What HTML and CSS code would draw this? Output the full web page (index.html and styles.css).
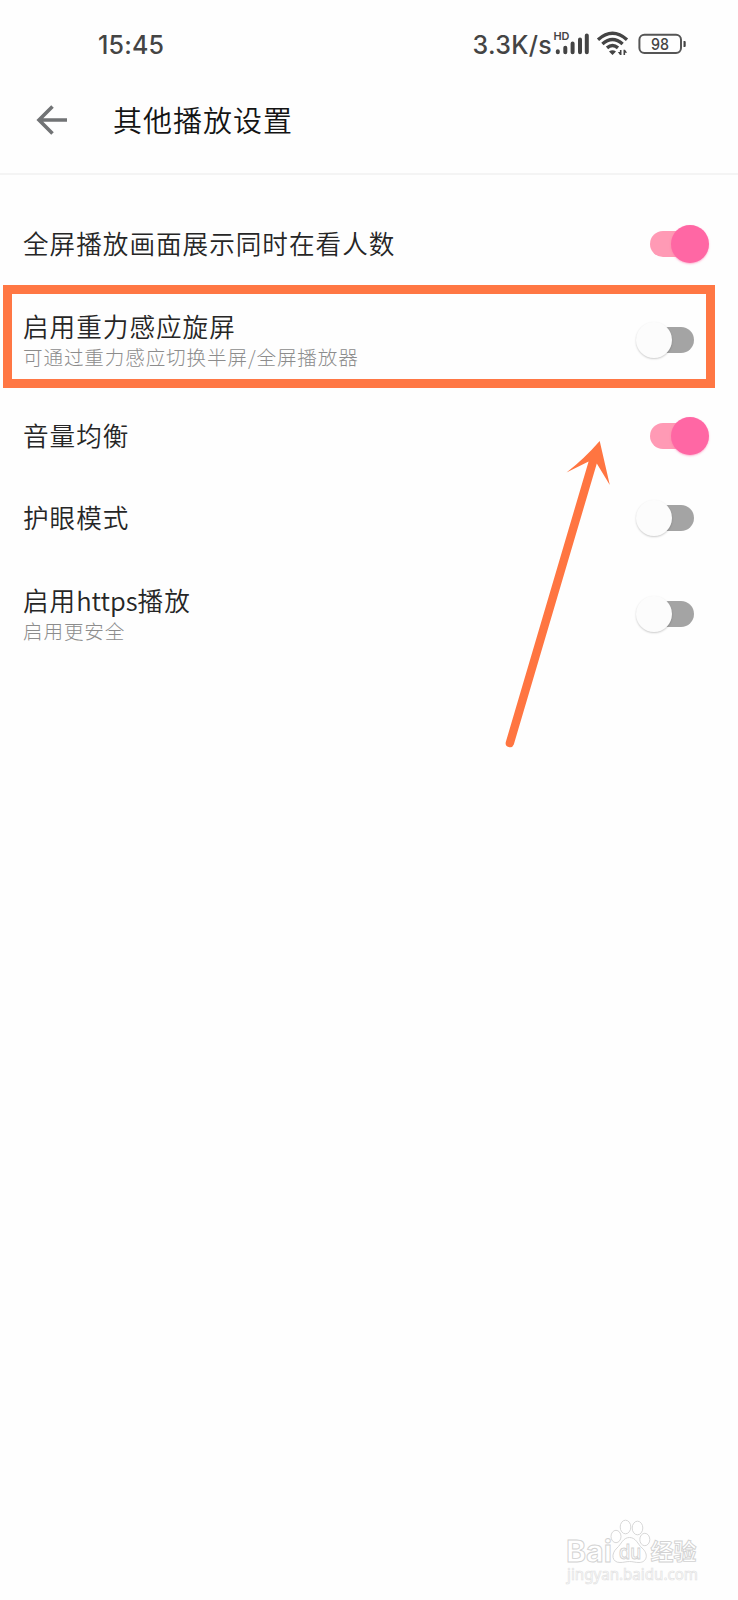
FILE: index.html
```html
<!DOCTYPE html>
<html lang="zh-CN">
<head>
<meta charset="utf-8">
<title>其他播放设置</title>
<link rel="stylesheet" href="styles.css">
</head>
<body>
<div class="screen">
  <div class="status">
    <span class="time">15:45</span>
    <div class="status-right">
      <span class="speed">3.3K/s</span>
      <svg class="status-icons" width="150" height="30" viewBox="0 0 150 30">
        <text class="hd" x="1.500" y="11" textLength="16" lengthAdjust="spacingAndGlyphs">HD</text>
        <g class="bars">
          <path d="M5.8 22.200v1M13.3 18.700v4.500M20.6 14.500v8.700M28 10.500v12.700M34.8 6.500v16.700"/>
        </g>
        <g class="wifi">
          <path d="M46 10.8Q60.500-2.200 75 10.8"/>
          <path d="M50.4 15Q60.500 6 70.600 15"/>
          <path d="M55 18.9Q60.500 14.2 66 18.9"/>
        </g>
        <path class="fill" d="M57 22.600Q60.500 19.8 64 22.600L60.500 26ZM69.5 20.9v5.2h-1.5l-2.1-3h2v-2.2ZM71.500 26v-5.2h1.5l2.1 3h-2v2.2Z"/>
        <rect class="battery" x="87.4" y="5.8" width="41.6" height="18.2" rx="5"/>
        <path class="fill" d="M131.5 12h1.2a1 1 0 0 1 1 1v4a1 1 0 0 1-1 1h-1.2Z"/>
        <text class="charge" x="108" y="20.8" textLength="18" lengthAdjust="spacingAndGlyphs">98</text>
      </svg>
    </div>
  </div>
  <header class="header">
    <svg class="back" width="32" height="32" viewBox="0 0 32 32"><path d="M16.5 2.5L3 16L16.5 29.5M3 16H31"/></svg>
    <h1 class="title">其他播放设置</h1>
  </header>
  <main class="list">
    <div class="row">
      <div class="name">全屏播放画面展示同时在看人数</div>
      <div class="switch on"><span class="thumb"></span></div>
    </div>
    <div class="row tall">
      <div class="label"><div class="name">启用重力感应旋屏</div><div class="desc">可通过重力感应切换半屏/全屏播放器</div></div>
      <div class="switch"><span class="thumb"></span></div>
      <div class="highlight"></div>
    </div>
    <div class="row">
      <div class="name">音量均衡</div>
      <div class="switch on"><span class="thumb"></span></div>
    </div>
    <div class="row">
      <div class="name">护眼模式</div>
      <div class="switch"><span class="thumb"></span></div>
    </div>
    <div class="row tall">
      <div class="label"><div class="name">启用<span class="latin">https</span>播放</div><div class="desc">启用更安全</div></div>
      <div class="switch"><span class="thumb"></span></div>
    </div>
  </main>
  <svg class="arrow" width="60" height="320" viewBox="0 0 60 320" overflow="visible">
    <path d="M49.7 1L59.8 45L46.8 23.5L-36.2 304.5A4.2 4.2 0 0 1 -44.2 302L38.6 21.5L16.5 32.5Q34 19 49.7 1Z"/>
  </svg>
  <svg class="watermark" width="140" height="70" viewBox="0 0 140 70">
    <text class="brand" x="1" y="45.500" textLength="46" lengthAdjust="spacingAndGlyphs">Bai</text>
    <g class="paw">
      <ellipse cx="51" cy="20.5" rx="5" ry="6.2"/>
      <ellipse cx="60.500" cy="11" rx="5.3" ry="6.8"/>
      <ellipse cx="72.500" cy="12" rx="5.3" ry="6.8"/>
      <ellipse cx="79.8" cy="23.5" rx="5" ry="6.2"/>
      <path d="M64.5 21.5C71 21.5 72.5 28 77 32C84 38 82 46.5 74 46.5C70 46.5 68 45.5 64.5 45.5S59 46.5 55 46.5C47 46.5 45.500 38 52 32C56.500 28 58 21.500 64.500 21.500Z"/>
    </g>
    <text class="du" x="54" y="42.500" textLength="22" lengthAdjust="spacingAndGlyphs">du</text>
    <text class="cn" x="85.500" y="44" textLength="46" lengthAdjust="spacingAndGlyphs">经验</text>
    <text class="url" x="2" y="63.500" textLength="131" lengthAdjust="spacingAndGlyphs">jingyan.baidu.com</text>
  </svg>
</div>
</body>
</html>
```
FILE: styles.css
```css
body { margin: 0; background: #fefefe; }
.screen {
  position: relative;
  width: 738px;
  height: 1600px;
  overflow: hidden;
  background: #fefefe;
  font-family: "Noto Sans CJK SC", sans-serif;
}
.status {
  display: flex;
  justify-content: space-between;
  align-items: flex-start;
  box-sizing: border-box;
  height: 80px;
  padding: 29px 36px 0 98px;
  color: #444;
}
.time, .speed {
  font: 450 25px/30px Inter, sans-serif;
}
.time { padding-top: 1px; letter-spacing: 0.2px; }
.status-right { display: flex; }
.speed { padding-top: 1px; letter-spacing: 0.3px; }
.status-icons { display: block; }
.hd { font: 600 11px Inter, sans-serif; fill: #444; }
.bars, .wifi { fill: none; stroke: #444; stroke-width: 4; stroke-linecap: round; }
.wifi { stroke-width: 3.4; stroke-linecap: butt; }
.fill { fill: #444; }
.battery { fill: none; stroke: #555; stroke-width: 2; }
.charge { font: 500 16px Inter, sans-serif; fill: #444; text-anchor: middle; }
.header {
  display: flex;
  align-items: center;
  box-sizing: border-box;
  height: 95px;
  padding: 0 0 14px 36px;
  gap: 45px;
  border-bottom: 2px solid #f4f4f4;
}
.back { fill: none; stroke: #717375; stroke-width: 3.6; }
.title {
  margin: 0;
  padding-bottom: 2px;
  font-size: 29px;
  line-height: 40px;
  font-weight: 350;
  letter-spacing: 1px;
  color: #141414;
}
.list { padding-top: 28px; }
.row {
  position: relative;
  display: flex;
  justify-content: space-between;
  align-items: center;
  box-sizing: border-box;
  height: 82.8px;
  padding: 0 44px 0 23px;
}
.row.tall { height: 108.5px; }
.name {
  padding-bottom: 2px;
  font-size: 25.6px;
  line-height: 36px;
  font-weight: 350;
  letter-spacing: 1px;
  color: #262626;
}
.latin { letter-spacing: 0; }
.label .name { padding: 0; }
.label { padding-bottom: 1px; }
.desc {
  margin-top: -1px;
  font-size: 19.6px;
  line-height: 28px;
  font-weight: 300;
  letter-spacing: 0.85px;
  color: #8c8c8c;
}
.switch {
  position: relative;
  width: 44px;
  height: 26px;
  border-radius: 13px;
  background: #a4a4a4;
}
.switch.on { background: #ff9ab5; }
.thumb {
  position: absolute;
  left: -14px;
  top: -5px;
  width: 36px;
  height: 36px;
  border-radius: 50%;
  background: #fcfcfc;
  box-shadow: 0 1px 2px rgba(0, 0, 0, .2);
}
.on .thumb {
  left: 21px;
  top: -6px;
  width: 38px;
  height: 38px;
  background: #ff67a4;
  box-shadow: 0 1px 2px rgba(255, 103, 164, .5);
}
.highlight {
  position: absolute;
  left: 3px;
  top: -1px;
  box-sizing: border-box;
  width: 712px;
  height: 103px;
  border: 9px solid #ff7744;
}
.arrow {
  position: absolute;
  left: 550px;
  top: 440px;
  fill: #ff7541;
}
.watermark {
  position: absolute;
  left: 565px;
  top: 1516px;
}
.watermark text, .paw { fill: #fff; stroke: #d2d2d2; stroke-width: .9; }
.brand { font: 700 30px Inter, sans-serif; }
.watermark .du { font: 500 20px Inter, sans-serif; }
.cn { font: 700 23px "Noto Sans CJK SC", sans-serif; }
.watermark .url { font: 400 16px "Noto Sans", sans-serif; fill: #fff; stroke: #e2e2e2; stroke-width: .7; }
```
